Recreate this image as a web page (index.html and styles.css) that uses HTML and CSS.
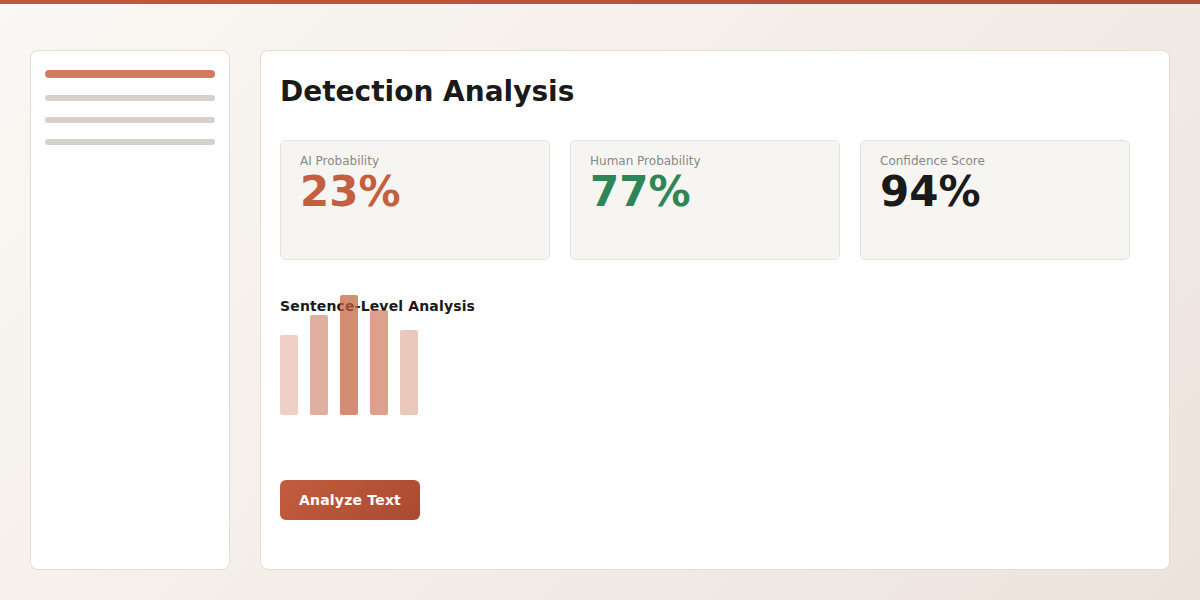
FILE: index.html
```html
<!DOCTYPE html>
<html lang="en">
<head>
    <meta charset="UTF-8">
    <meta name="viewport" content="width=device-width, initial-scale=1.0">
    <title>Detection Analysis</title>
    <link rel="stylesheet" href="styles.css">
</head>
<body>
    <div class="topbar"></div>
    <div class="layout">
        <aside class="sidebar">
            <div class="nav-line active"></div>
            <div class="nav-line"></div>
            <div class="nav-line"></div>
            <div class="nav-line"></div>
        </aside>
        <main class="panel">
            <h1>Detection Analysis</h1>
            <div class="stats">
                <div class="stat">
                    <div class="stat-label">AI Probability</div>
                    <div class="stat-value ai">23%</div>
                </div>
                <div class="stat">
                    <div class="stat-label">Human Probability</div>
                    <div class="stat-value human">77%</div>
                </div>
                <div class="stat">
                    <div class="stat-label">Confidence Score</div>
                    <div class="stat-value">94%</div>
                </div>
            </div>
            <h2>Sentence-Level Analysis</h2>
            <div class="chart">
                <div class="bar" style="height: 80%; opacity: 0.3;"></div>
                <div class="bar" style="height: 100%; opacity: 0.5;"></div>
                <div class="bar" style="height: 120%; opacity: 0.72;"></div>
                <div class="bar" style="height: 105%; opacity: 0.6;"></div>
                <div class="bar" style="height: 85%; opacity: 0.35;"></div>
            </div>
            <button class="analyze">Analyze Text</button>
        </main>
    </div>
</body>
</html>
```

FILE: styles.css
```css
body {
    margin: 0;
    font-family: "DejaVu Sans", Verdana, sans-serif;
    background: linear-gradient(135deg, #faf8f4 0%, #ede3dd 100%);
    height: 600px;
    color: #1a1a1a;
}
.topbar {
    height: 4px;
    background: linear-gradient(90deg, #c05a3c, #b04d33);
}
.layout {
    display: flex;
    gap: 30px;
    padding: 46px 30px 30px;
    height: 520px;
}
.sidebar {
    width: 200px;
    box-sizing: border-box;
    background: #fff;
    border: 1px solid #e6ddd4;
    border-radius: 8px;
    padding: 19px 14px;
    display: flex;
    flex-direction: column;
    gap: 16px;
}
.nav-line {
    height: 6px;
    border-radius: 3px;
    background: #d6d1ca;
}
.nav-line.active {
    height: 8px;
    border-radius: 4px;
    background: #d07c64;
    margin-bottom: 1px;
}
.panel {
    flex: 1;
    box-sizing: border-box;
    background: #fff;
    border: 1px solid #e6ddd4;
    border-radius: 8px;
    padding: 19px;
}
h1 {
    margin: 0 0 26px;
    font-size: 28px;
    line-height: 44px;
    font-weight: bold;
}
.stats {
    display: grid;
    grid-template-columns: repeat(3, 270px);
    gap: 20px;
}
.stat {
    height: 120px;
    box-sizing: border-box;
    background: #f7f5f2;
    border: 1px solid #e8e1da;
    border-radius: 6px;
    padding: 12px 19px;
}
.stat-label {
    font-size: 12px;
    line-height: 16px;
    color: #888;
}
.stat-value {
    font-size: 42px;
    line-height: 46px;
    font-weight: bold;
    color: #1a1a1a;
}
.stat-value.ai {
    color: #c4603f;
}
.stat-value.human {
    color: #2e8555;
}
h2 {
    margin: 37px 0 0;
    font-size: 14px;
    line-height: 18px;
    font-weight: bold;
    letter-spacing: 0.15px;
}
.chart {
    height: 100px;
    display: flex;
    align-items: flex-end;
    gap: 12px;
}
.bar {
    width: 18px;
    border-radius: 2px;
    background: #c4603f;
}
.analyze {
    display: block;
    margin-top: 65px;
    width: 140px;
    height: 40px;
    border: none;
    border-radius: 6px;
    background: linear-gradient(135deg, #c25d3e, #a94a31);
    color: #fff;
    font-family: inherit;
    font-size: 14px;
    font-weight: bold;
    letter-spacing: 0.2px;
    cursor: pointer;
}
```
